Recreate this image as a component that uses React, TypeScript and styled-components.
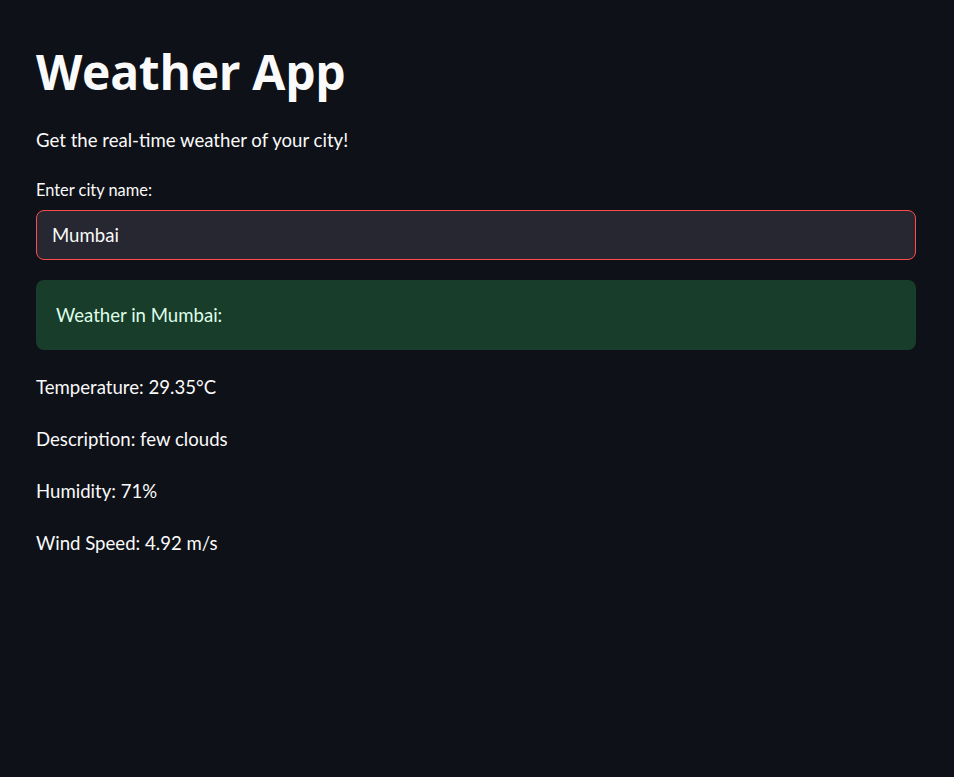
import React from "react";
import styled, { createGlobalStyle } from "styled-components";

const Global = createGlobalStyle`
  html, body { margin: 0; padding: 0; background: #0e1117; }
  body { font-family: Lato, "Open Sans", sans-serif; color: #fafafa; }
  * { box-sizing: border-box; }
`;

const Page = styled.main`
  min-height: 777px;
  background: #0e1117;
  padding: 36px 38px 0 36px;
  display: flex;
  flex-direction: column;
`;

const Title = styled.h1`
  margin: 0;
  font-family: "Open Sans", Lato, sans-serif;
  font-size: 48px;
  font-weight: 700;
  line-height: 72px;
  letter-spacing: -0.3px;
  color: #fafafa;
`;

const Subtitle = styled.p`
  margin: 20px 0 0;
  font-size: 18.6px;
  line-height: 24px;
`;

const Label = styled.label`
  margin-top: 27px;
  font-size: 16.4px;
  line-height: 22px;
`;

const Input = styled.input`
  margin-top: 9px;
  height: 50px;
  width: 100%;
  background: #262730;
  border: 1px solid #ff4b4b;
  border-radius: 8px;
  color: #fafafa;
  font-family: inherit;
  font-size: 18.6px;
  padding: 0 15px;
  outline: none;
`;

const Success = styled.div`
  margin-top: 20px;
  height: 70px;
  border-radius: 8px;
  background: #183d2a;
  color: #dffde9;
  font-size: 18.6px;
  display: flex;
  align-items: center;
  padding: 0 20px;
`;

const Line = styled.p`
  margin: 0;
  font-size: 18.6px;
  line-height: 24px;
  height: 52px;
  display: flex;
  align-items: center;
`;

const Lines = styled.div`
  margin-top: 11px;
  display: flex;
  flex-direction: column;
`;

export default function App() {
  return (
    <>
      <Global />
      <Page>
        <Title>Weather App</Title>
        <Subtitle>Get the real-time weather of your city!</Subtitle>
        <Label>Enter city name:</Label>
        <Input defaultValue="Mumbai" />
        <Success>Weather in Mumbai:</Success>
        <Lines>
          <Line>Temperature: 29.35°C</Line>
          <Line>Description: few clouds</Line>
          <Line>Humidity: 71%</Line>
          <Line>Wind Speed: 4.92 m/s</Line>
        </Lines>
      </Page>
    </>
  );
}
